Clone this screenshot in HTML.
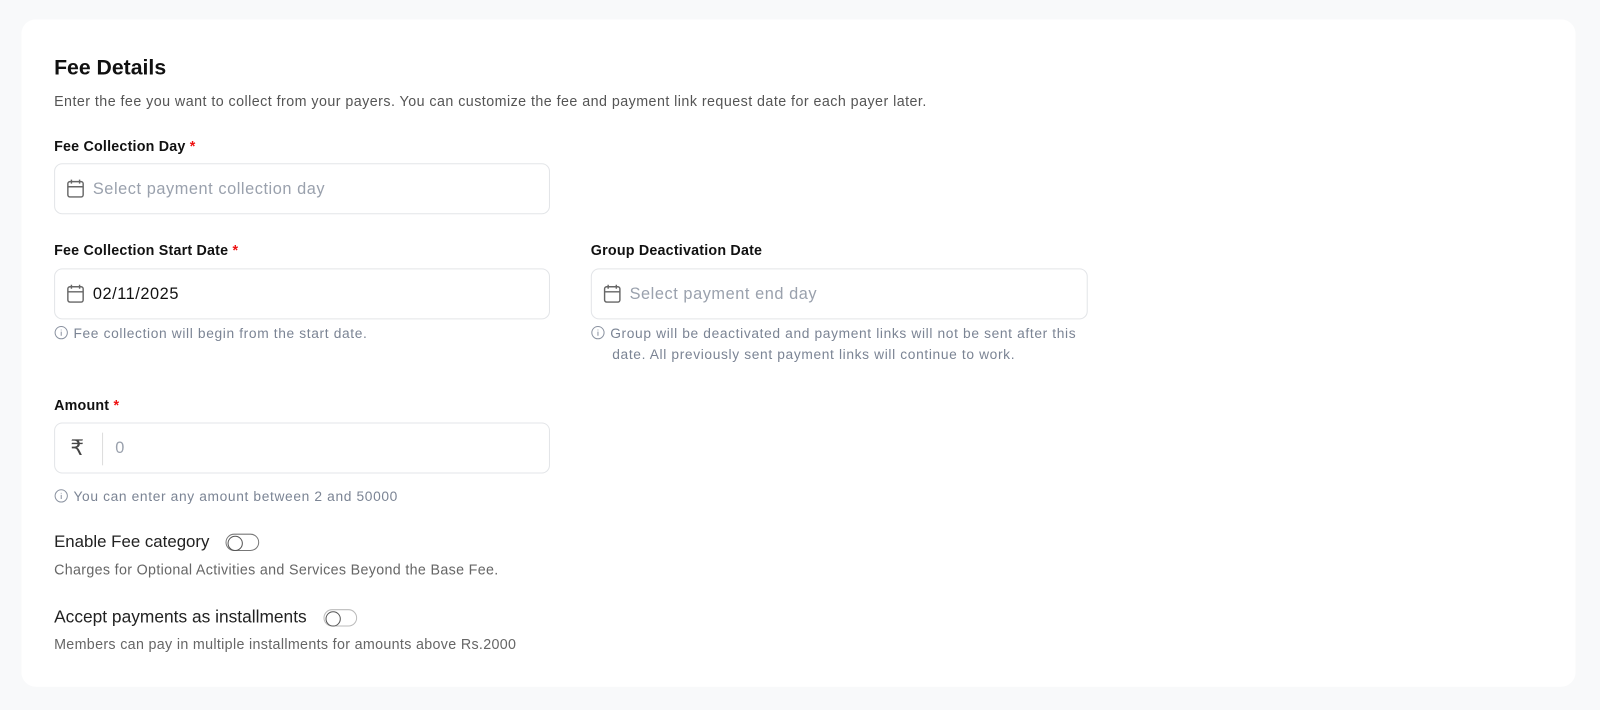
<!DOCTYPE html>
<html><head><style>
*{box-sizing:border-box;margin:0;padding:0}
body{width:1600px;height:710px;background:#f8f9fa;font-family:"Liberation Sans",sans-serif;overflow:hidden}
.w{position:absolute;left:0;top:0;width:1568px;height:696px;transform:scale(1.0204);transform-origin:0 0}
.card{position:absolute;left:21px;top:19px;width:1523px;height:654px;background:#fff;border-radius:14px}
.a{position:absolute;white-space:nowrap}
h1{position:absolute;left:53px;top:55px;font-size:20.8px;font-weight:bold;color:#111}
.sub{left:53px;top:91px;font-size:14px;letter-spacing:.44px;color:#555}
.lbl{font-size:14px;letter-spacing:.2px;font-weight:bold;color:#111}
.lbl b{color:#e11;font-weight:bold}
.inp{position:absolute;height:50px;border:1px solid #e3e5e8;border-radius:8px;background:#fff}
.inp .t{position:absolute;left:37px;top:16px;font-size:16px;letter-spacing:.55px;color:#9aa1ad}
.inp svg{position:absolute;left:11px;top:14px}
.help{font-size:13.5px;letter-spacing:.62px;color:#7b8494;line-height:21px}
.help svg{vertical-align:-2px;margin-right:5px}
.row{display:flex;align-items:center}
.tg{font-size:16.5px;color:#222}
.desc{font-size:14px;letter-spacing:.32px;color:#666}
.sw{position:relative;width:33px;height:17px;border:1px solid #777;border-radius:9px;margin-left:16px}
.sw:after{content:"";position:absolute;left:1px;top:1px;width:13px;height:13px;border:1px solid #555;border-radius:50%}
</style></head><body><div class="w">
<div class="card"></div>
<h1>Fee Details</h1>
<div class="a sub">Enter the fee you want to collect from your payers. You can customize the fee and payment link request date for each payer later.</div>

<div class="a lbl" style="left:53px;top:135px">Fee Collection Day <b>*</b></div>
<div class="inp" style="left:53px;top:160px;width:486px"><svg width="18" height="20" viewBox="0 0 18 20" fill="none" stroke="#666" stroke-width="1.4"><rect x="1.5" y="3" width="15" height="15" rx="2"/><path d="M1.5 8h15M5 1v4M13 1v4"/></svg><div class="t">Select payment collection day</div></div>

<div class="a lbl" style="left:53px;top:237px">Fee Collection Start Date <b>*</b></div>
<div class="inp" style="left:53px;top:263px;width:486px"><svg width="18" height="20" viewBox="0 0 18 20" fill="none" stroke="#666" stroke-width="1.4"><rect x="1.5" y="3" width="15" height="15" rx="2"/><path d="M1.5 8h15M5 1v4M13 1v4"/></svg><div class="t" style="color:#111">02/11/2025</div></div>
<div class="a help" style="left:53px;top:316px"><svg width="14" height="14" viewBox="0 0 14 14" fill="none" stroke="#8a92a0" stroke-width="1"><circle cx="7" cy="7" r="6"/><path d="M7 6v4M7 4v.8"/></svg>Fee collection will begin from the start date.</div>

<div class="a lbl" style="left:579px;top:237px">Group Deactivation Date</div>
<div class="inp" style="left:579px;top:263px;width:487px"><svg width="18" height="20" viewBox="0 0 18 20" fill="none" stroke="#666" stroke-width="1.4"><rect x="1.5" y="3" width="15" height="15" rx="2"/><path d="M1.5 8h15M5 1v4M13 1v4"/></svg><div class="t">Select payment end day</div></div>
<div class="a help" style="left:579px;top:316px"><svg width="14" height="14" viewBox="0 0 14 14" fill="none" stroke="#8a92a0" stroke-width="1"><circle cx="7" cy="7" r="6"/><path d="M7 6v4M7 4v.8"/></svg>Group will be deactivated and payment links will not be sent after this<br><span style="padding-left:21px">date. All previously sent payment links will continue to work.</span></div>

<div class="a lbl" style="left:53px;top:389px">Amount <b>*</b></div>
<div class="inp" style="left:53px;top:414px;width:486px"><div style="position:absolute;left:15px;top:12px;font-size:21px;color:#444">₹</div><div style="position:absolute;left:46px;top:9px;width:1px;height:32px;background:#ddd"></div><div class="t" style="left:59px">0</div></div>
<div class="a help" style="left:53px;top:476px"><svg width="14" height="14" viewBox="0 0 14 14" fill="none" stroke="#8a92a0" stroke-width="1"><circle cx="7" cy="7" r="6"/><path d="M7 6v4M7 4v.8"/></svg>You can enter any amount between 2 and 50000</div>

<div class="a row" style="left:53px;top:522px"><span class="tg">Enable Fee category</span><div class="sw"></div></div>
<div class="a desc" style="left:53px;top:550px">Charges for Optional Activities and Services Beyond the Base Fee.</div>

<div class="a row" style="left:53px;top:595px"><span class="tg" style="font-size:17px">Accept payments as installments</span><div class="sw" style="border-color:#bbb"></div></div>
<div class="a desc" style="left:53px;top:623px">Members can pay in multiple installments for amounts above Rs.2000</div>
</div></body></html>
